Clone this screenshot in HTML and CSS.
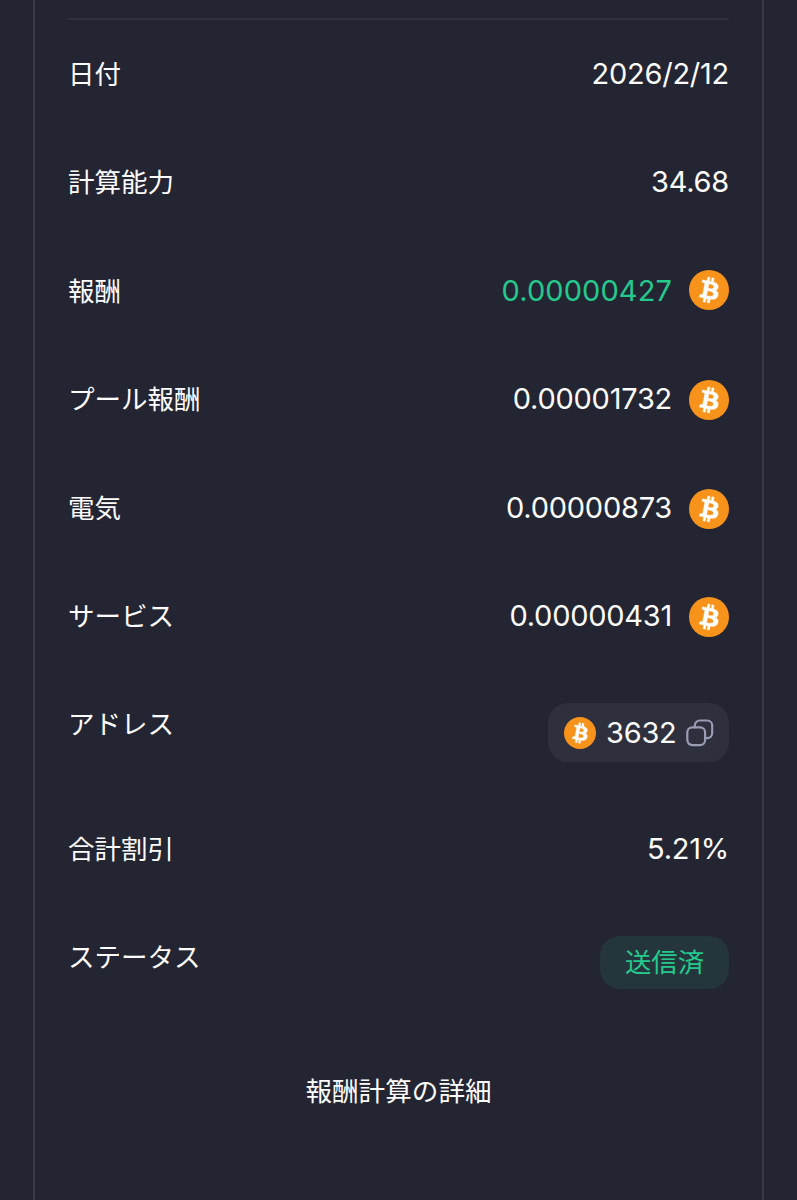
FILE: index.html
```html
<!DOCTYPE html>
<html lang="ja">
<head>
    <meta charset="UTF-8">
    <title>報酬</title>
    <link rel="stylesheet" href="styles.css">
</head>
<body>

<svg class="symbols" width="0" height="0">
    <symbol id="btc" viewBox="0 0 32 32">
        <circle cx="16" cy="16" r="16" fill="#f7931a"/>
        <path fill="#fff" stroke="#fff" stroke-width=".35" transform="translate(16 16) rotate(-3) scale(1.04) translate(-16 -16)" d="M23.189 14.02c.314-2.096-1.283-3.223-3.465-3.975l.708-2.84-1.728-.43-.69 2.765c-.454-.114-.92-.22-1.385-.326l.695-2.783L15.596 6l-.708 2.839c-.376-.086-.746-.17-1.104-.26l.002-.009-2.384-.595-.46 1.846s1.283.294 1.256.312c.7.175.826.638.805 1.006l-.806 3.235c.048.012.11.03.18.057l-.183-.045-1.13 4.532c-.086.212-.303.531-.793.41.018.025-1.256-.313-1.256-.313l-.858 1.978 2.25.561c.418.105.828.215 1.231.318l-.715 2.872 1.727.43.708-2.84c.472.127.93.245 1.378.357l-.706 2.828 1.728.43.715-2.866c2.948.558 5.164.333 6.097-2.333.752-2.146-.037-3.385-1.588-4.192 1.13-.26 1.98-1.003 2.207-2.538zm-3.95 5.538c-.533 2.147-4.148.986-5.32.695l.95-3.805c1.172.293 4.929.872 4.37 3.11zm.535-5.569c-.487 1.953-3.495.96-4.47.717l.86-3.45c.975.243 4.118.696 3.61 2.733z"/>
    </symbol>
</svg>

<div class="card">
    <div class="rows">
        <div class="row">
            <span class="label">日付</span>
            <span class="value">2026/2/12</span>
        </div>
        <div class="row">
            <span class="label">計算能力</span>
            <span class="value">34.68</span>
        </div>
        <div class="row">
            <span class="label">報酬</span>
            <span class="value reward">0.00000427 <svg class="coin"><use href="#btc"/></svg></span>
        </div>
        <div class="row">
            <span class="label">プール報酬</span>
            <span class="value fee">0.00001732 <svg class="coin"><use href="#btc"/></svg></span>
        </div>
        <div class="row">
            <span class="label">電気</span>
            <span class="value fee">0.00000873 <svg class="coin"><use href="#btc"/></svg></span>
        </div>
        <div class="row">
            <span class="label">サービス</span>
            <span class="value fee">0.00000431 <svg class="coin"><use href="#btc"/></svg></span>
        </div>
        <div class="row row-address">
            <span class="label">アドレス</span>
            <span class="address">
                <svg class="coin-small"><use href="#btc"/></svg>
                <span>3632</span>
                <svg class="copy" viewBox="0 0 28 28">
                    <path d="M8.8 8.3V6.5a5 5 0 0 1 5-5h7.4a5 5 0 0 1 5 5v7.6a5 5 0 0 1-5 5h-1.8"/>
                    <rect x="1.3" y="8.3" width="17.8" height="17.8" rx="5"/>
                </svg>
            </span>
        </div>
        <div class="row">
            <span class="label">合計割引</span>
            <span class="value">5.21%</span>
        </div>
        <div class="row">
            <span class="label">ステータス</span>
            <span class="status">送信済</span>
        </div>
    </div>
    <div class="details">報酬計算の詳細</div>
</div>

</body>
</html>
```
FILE: styles.css
```css
body {
    margin: 0;
    background: #242532;
    color: #fcfcfd;
    font-family: Inter, "Noto Sans CJK JP", sans-serif;
}
.symbols {
    display: block;
}
.card {
    box-sizing: border-box;
    height: 1200px;
    margin: 0 33px;
    padding: 18px 33px 0;
    border-left: 2px solid #383a46;
    border-right: 2px solid #383a46;
}
.rows {
    border-top: 2px solid #2f313d;
}
.row {
    display: flex;
    justify-content: space-between;
    align-items: flex-start;
    padding: 33px 0 34.4px;
}
.row-address {
    padding-bottom: 32.6px;
}
.label {
    padding-top: 1px;
    font-size: 26.5px;
    line-height: 40px;
}
.value {
    display: flex;
    align-items: center;
    gap: 17px;
    height: 41px;
    font-size: 29px;
    letter-spacing: -0.25px;
}
.reward {
    color: #24c98d;
    letter-spacing: 0.1px;
}
.coin {
    width: 40px;
    height: 40px;
}
.fee .coin {
    margin-top: 3px;
}
.address {
    display: flex;
    align-items: center;
    box-sizing: border-box;
    width: 181px;
    height: 59px;
    padding-left: 16px;
    border-radius: 20px;
    background: #2f303d;
    font-size: 29px;
    letter-spacing: -0.25px;
}
.coin-small {
    width: 32px;
    height: 32px;
    margin-right: 10px;
}
.copy {
    width: 28px;
    height: 28px;
    margin-left: 9px;
    fill: none;
    stroke: #9a9bb5;
    stroke-width: 2.2;
    stroke-linecap: round;
}
.status {
    box-sizing: border-box;
    width: 129px;
    height: 53px;
    border-radius: 20px;
    background: #24363b;
    color: #24c98d;
    font-size: 26.4px;
    line-height: 53px;
    text-align: center;
}
.details {
    margin-top: 47px;
    font-size: 26.6px;
    line-height: 41px;
    text-align: center;
}
```
